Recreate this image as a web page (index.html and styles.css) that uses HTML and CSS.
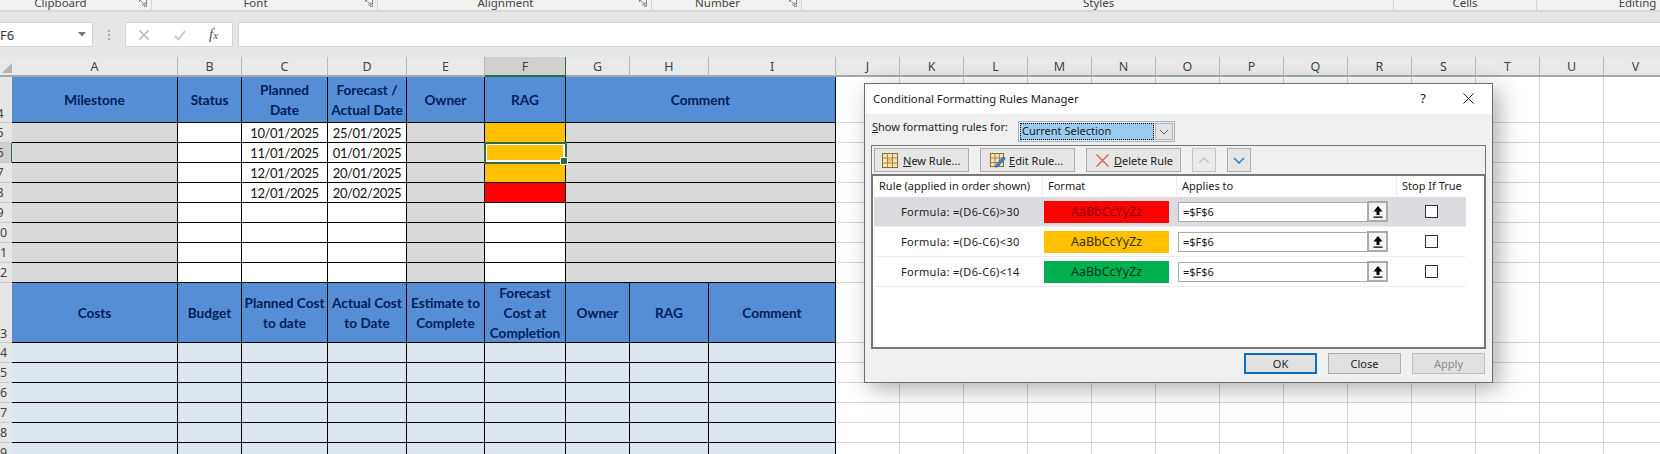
FILE: index.html
```html
<!DOCTYPE html>
<html lang="en">
<head>
<meta charset="utf-8">
<title>Conditional Formatting Rules Manager</title>
<link rel="stylesheet" href="styles.css">
</head>
<body>
<div class="ribbon">
  <div class="rgroup g-clip"><span class="rlabel rlabel-clip">Clipboard</span><svg class="launch" viewBox="0 0 8 8"><path d="M.5 3V.5H7.5V7.5H5M1 1l5 5M6 3v3H3" fill="none" stroke="#8a8a8a"/></svg></div>
  <div class="rgroup g-font"><span class="rlabel">Font</span><svg class="launch" viewBox="0 0 8 8"><path d="M.5 3V.5H7.5V7.5H5M1 1l5 5M6 3v3H3" fill="none" stroke="#8a8a8a"/></svg></div>
  <div class="rgroup g-align"><span class="rlabel">Alignment</span><svg class="launch" viewBox="0 0 8 8"><path d="M.5 3V.5H7.5V7.5H5M1 1l5 5M6 3v3H3" fill="none" stroke="#8a8a8a"/></svg></div>
  <div class="rgroup g-num"><span class="rlabel">Number</span><svg class="launch" viewBox="0 0 8 8"><path d="M.5 3V.5H7.5V7.5H5M1 1l5 5M6 3v3H3" fill="none" stroke="#8a8a8a"/></svg></div>
  <div class="rgroup g-styles"><span class="rlabel">Styles</span></div>
  <div class="rgroup g-cells"><span class="rlabel">Cells</span></div>
  <div class="rgroup g-edit"><span class="rlabel">Editing</span></div>
</div>
<div class="fbar">
  <div class="namebox"><span>F6</span><svg class="nb-arrow" viewBox="0 0 8 5"><path d="M0 0h8L4 4.500z" fill="#777"/></svg></div>
  <div class="dots"><i></i><i></i><i></i></div>
  <div class="fxbox">
    <svg class="fxi" viewBox="0 0 12 12"><path d="M1.500 1.500l9 9M10.500 1.500l-9 9" stroke="#c4c4c4" stroke-width="1.800" fill="none"/></svg>
    <svg class="fxi" viewBox="0 0 12 12"><path d="M1 7l3.500 3.500L11 2" stroke="#c4c4c4" stroke-width="1.800" fill="none"/></svg>
    <span class="fxt">f<sub>x</sub></span>
  </div>
  <div class="finput"></div>
</div>
<div class="sheet">
  <div class="ch corner"><svg class="corner-t" viewBox="0 0 10 10"><path d="M10 0v10H0z" fill="#b4b4b4"/></svg></div>
  <div class="ch">A</div><div class="ch">B</div><div class="ch">C</div><div class="ch">D</div><div class="ch">E</div><div class="ch ch-sel">F</div><div class="ch">G</div><div class="ch">H</div><div class="ch">I</div><div class="ch">J</div><div class="ch">K</div><div class="ch">L</div><div class="ch">M</div><div class="ch">N</div><div class="ch">O</div><div class="ch">P</div><div class="ch">Q</div><div class="ch">R</div><div class="ch">S</div><div class="ch">T</div><div class="ch">U</div><div class="ch">V</div>

  <div class="rh rh-end r-tall"><span>4</span></div>
  <div class="c hd">Milestone</div><div class="c hd">Status</div><div class="c hd">Planned<br>Date</div><div class="c hd">Forecast /<br>Actual Date</div><div class="c hd">Owner</div><div class="c hd">RAG</div><div class="c hd wide">Comment</div><div class="blank"></div>

  <div class="rh"><span>5</span></div><div class="c gy"></div><div class="c"></div><div class="c">10/01/2025</div><div class="c">25/01/2025</div><div class="c gy"></div><div class="c am"></div><div class="c gy wide"></div><div class="blank"></div>
  <div class="rh rh-sel"><span>6</span></div><div class="c gy"></div><div class="c"></div><div class="c">11/01/2025</div><div class="c">01/01/2025</div><div class="c gy"></div><div class="c am active"></div><div class="c gy wide"></div><div class="blank"></div>
  <div class="rh"><span>7</span></div><div class="c gy"></div><div class="c"></div><div class="c">12/01/2025</div><div class="c">20/01/2025</div><div class="c gy"></div><div class="c am"></div><div class="c gy wide"></div><div class="blank"></div>
  <div class="rh"><span>8</span></div><div class="c gy"></div><div class="c"></div><div class="c">12/01/2025</div><div class="c">20/02/2025</div><div class="c gy"></div><div class="c rd"></div><div class="c gy wide"></div><div class="blank"></div>
  <div class="rh"><span>9</span></div><div class="c gy"></div><div class="c"></div><div class="c"></div><div class="c"></div><div class="c gy"></div><div class="c"></div><div class="c gy wide"></div><div class="blank"></div>
  <div class="rh"><span>10</span></div><div class="c gy"></div><div class="c"></div><div class="c"></div><div class="c"></div><div class="c gy"></div><div class="c"></div><div class="c gy wide"></div><div class="blank"></div>
  <div class="rh"><span>11</span></div><div class="c gy"></div><div class="c"></div><div class="c"></div><div class="c"></div><div class="c gy"></div><div class="c"></div><div class="c gy wide"></div><div class="blank"></div>
  <div class="rh"><span>12</span></div><div class="c gy"></div><div class="c"></div><div class="c"></div><div class="c"></div><div class="c gy"></div><div class="c"></div><div class="c gy wide"></div><div class="blank"></div>

  <div class="rh rh-end"><span>13</span></div>
  <div class="c hd">Costs</div><div class="c hd">Budget</div><div class="c hd">Planned Cost<br>to date</div><div class="c hd">Actual Cost<br>to Date</div><div class="c hd">Estimate to<br>Complete</div><div class="c hd">Forecast<br>Cost at<br>Completion</div><div class="c hd">Owner</div><div class="c hd">RAG</div><div class="c hd">Comment</div><div class="blank"></div>

  <div class="rh"><span>14</span></div><div class="c lb"></div><div class="c lb"></div><div class="c lb"></div><div class="c lb"></div><div class="c lb"></div><div class="c lb"></div><div class="c lb"></div><div class="c lb"></div><div class="c lb"></div><div class="blank"></div>
  <div class="rh"><span>15</span></div><div class="c lb"></div><div class="c lb"></div><div class="c lb"></div><div class="c lb"></div><div class="c lb"></div><div class="c lb"></div><div class="c lb"></div><div class="c lb"></div><div class="c lb"></div><div class="blank"></div>
  <div class="rh"><span>16</span></div><div class="c lb"></div><div class="c lb"></div><div class="c lb"></div><div class="c lb"></div><div class="c lb"></div><div class="c lb"></div><div class="c lb"></div><div class="c lb"></div><div class="c lb"></div><div class="blank"></div>
  <div class="rh"><span>17</span></div><div class="c lb"></div><div class="c lb"></div><div class="c lb"></div><div class="c lb"></div><div class="c lb"></div><div class="c lb"></div><div class="c lb"></div><div class="c lb"></div><div class="c lb"></div><div class="blank"></div>
  <div class="rh"><span>18</span></div><div class="c lb"></div><div class="c lb"></div><div class="c lb"></div><div class="c lb"></div><div class="c lb"></div><div class="c lb"></div><div class="c lb"></div><div class="c lb"></div><div class="c lb"></div><div class="blank"></div>
  <div class="rh"><span>19</span></div><div class="c lb"></div><div class="c lb"></div><div class="c lb"></div><div class="c lb"></div><div class="c lb"></div><div class="c lb"></div><div class="c lb"></div><div class="c lb"></div><div class="c lb"></div><div class="blank"></div>
</div>

<div class="dialog">
  <div class="d-title">
    <span class="d-title-text">Conditional Formatting Rules Manager</span>
    <span class="d-help">?</span>
    <svg class="d-close" viewBox="0 0 11 11"><path d="M.5.500l10 10M10.500.500l-10 10" stroke="#222" fill="none"/></svg>
  </div>
  <div class="d-show">
    <span class="d-show-label"><u>S</u>how formatting rules for:</span>
    <div class="d-select">
      <span class="d-sel-text">Current Selection</span>
      <span class="d-sel-btn"><svg class="chev" viewBox="0 0 10 6"><path d="M1 1l4 4 4-4" stroke="#555" fill="none"/></svg></span>
    </div>
  </div>
  <div class="panel">
    <div class="toolbar">
      <div class="tbtn tbtn-new">
        <svg class="ticon" viewBox="0 0 16 15"><rect x=".5" y=".5" width="15" height="14" fill="#fbe3b4" stroke="#8a6d3b"/><path d="M.5 5h15M.5 10h15M5.500.500v14M10.500.500v14" stroke="#a5814a" fill="none"/><rect x="6" y="5.500" width="4" height="4" fill="#f6c26b"/></svg>
        <span><u>N</u>ew Rule...</span>
      </div>
      <div class="tbtn tbtn-edit">
        <svg class="ticon" viewBox="0 0 16 15"><rect x=".5" y=".5" width="13" height="13" fill="#fbe3b4" stroke="#8a6d3b"/><path d="M.5 5h13M.5 9.500h13M5 .500v13M9.500.500v13" stroke="#a5814a" fill="none"/><path d="M5.500 14.500l1-3.500 7-7.500 2 2-7 7.500z" fill="#3b86d1" stroke="#27629f" stroke-width=".6"/></svg>
        <span><u>E</u>dit Rule...</span>
      </div>
      <div class="tbtn tbtn-del">
        <svg class="ticon-x" viewBox="0 0 13 13"><path d="M.5.500l12 12M12.500.500l-12 12" stroke="#e2574c" stroke-width="1.200" fill="none"/></svg>
        <span><u>D</u>elete Rule</span>
      </div>
      <div class="tbtn tbtn-sq tbtn-off"><svg class="chev-b" viewBox="0 0 12 7"><path d="M1 6l5-5 5 5" stroke="#c4c4c4" stroke-width="1.300" fill="none"/></svg></div>
      <div class="tbtn tbtn-sq"><svg class="chev-b" viewBox="0 0 12 7"><path d="M1 1l5 5 5-5" stroke="#3b7fbf" stroke-width="1.500" fill="none"/></svg></div>
    </div>
    <div class="list">
      <div class="l-row l-head">
        <div class="lh">Rule (applied in order shown)</div>
        <div class="lh">Format</div>
        <div class="lh">Applies to</div>
        <div class="lh">Stop If True</div>
      </div>
      <div class="l-row rule rule-sel">
        <div class="r-name">Formula: =(D6-C6)&gt;30</div>
        <div class="r-fmt"><div class="sw sw-r">AaBbCcYyZz</div></div>
        <div class="r-app"><div class="appbox"><span class="app-text">=$F$6</span><span class="app-btn"><svg class="up" viewBox="0 0 10 12"><path d="M5 0L.5 5.500H3.500V9h3V5.500h3zM.5 10.500h9v1.200h-9z" fill="#000"/></svg></span></div></div>
        <div class="r-stop"><span class="cb"></span></div>
      </div>
      <div class="l-row rule">
        <div class="r-name">Formula: =(D6-C6)&lt;30</div>
        <div class="r-fmt"><div class="sw sw-a">AaBbCcYyZz</div></div>
        <div class="r-app"><div class="appbox"><span class="app-text">=$F$6</span><span class="app-btn"><svg class="up" viewBox="0 0 10 12"><path d="M5 0L.5 5.500H3.500V9h3V5.500h3zM.5 10.500h9v1.200h-9z" fill="#000"/></svg></span></div></div>
        <div class="r-stop"><span class="cb"></span></div>
      </div>
      <div class="l-row rule">
        <div class="r-name">Formula: =(D6-C6)&lt;14</div>
        <div class="r-fmt"><div class="sw sw-g">AaBbCcYyZz</div></div>
        <div class="r-app"><div class="appbox"><span class="app-text">=$F$6</span><span class="app-btn"><svg class="up" viewBox="0 0 10 12"><path d="M5 0L.5 5.500H3.500V9h3V5.500h3zM.5 10.500h9v1.200h-9z" fill="#000"/></svg></span></div></div>
        <div class="r-stop"><span class="cb"></span></div>
      </div>
    </div>
  </div>
  <div class="d-foot">
    <div class="fbtn fbtn-ok">OK</div>
    <div class="fbtn">Close</div>
    <div class="fbtn fbtn-off">Apply</div>
  </div>
</div>
</body>
</html>
```
FILE: styles.css
```css
* { box-sizing: border-box; }
html, body { margin: 0; padding: 0; }
body {
  width: 1660px; height: 454px; overflow: hidden; position: relative;
  background: #fff; font-family: "Noto Sans", sans-serif; color: #222;
}

/* ribbon */
.ribbon { height: 10px; display: flex; background: #f3f2f1; overflow: hidden; }
.rgroup { display: flex; align-items: flex-start; height: 10px; border-right: 1px solid #d4d4d4; color: #444; }
.g-clip { width: 152px; } .g-font { width: 226px; } .g-align { width: 274px; } .g-num { width: 150px; }
.g-styles { width: 592px; } .g-cells { width: 143px; } .g-edit { width: 123px; border-right: 0; }
.rlabel { flex: 1; text-align: center; font-size: 11.500px; line-height: 6px; padding-right: 6px; white-space: nowrap; }
.rlabel-clip { padding-right: 18px; }
.g-styles .rlabel { padding-right: 0; text-align: left; margin-left: 281px; }
.g-cells .rlabel { padding-right: 0; }
.g-edit .rlabel { padding-right: 0; margin-left: 78px; }
.launch { width: 8px; height: 8px; margin: -1px 4px 0 0; flex: none; }

/* formula bar */
.fbar {
  height: 47px; display: flex; padding: 12px 0 10px; align-items: stretch;
  background: linear-gradient(#d2d2d2, #e6e6e6 3px);
}
.namebox { width: 93px; background: #fff; border: 1px solid #d4d4d4; border-left: 0; display: flex; align-items: center; justify-content: space-between; padding-right: 6px; font-size: 13px; color: #333; }
.nb-arrow { width: 8px; height: 5px; }
.dots { width: 32px; display: flex; flex-direction: column; align-items: center; justify-content: center; gap: 2px; }
.dots i { width: 2px; height: 2px; background: #aaa; display: block; }
.fxbox { width: 108px; background: #fff; border: 1px solid #d4d4d4; display: flex; align-items: center; padding-left: 12px; gap: 24px; }
.fxi { width: 12px; height: 12px; }
.fxt { font-family: "Liberation Serif", serif; font-style: italic; font-size: 15px; color: #555; margin-left: -1px; line-height: 1; }
.fxt sub { font-size: 11px; vertical-align: baseline; }
.finput { flex: 1; margin-left: 5px; background: #fff; border: 1px solid #d4d4d4; border-right: 0; }

/* sheet */
.sheet {
  display: grid;
  grid-template-columns: 12px 166px 64px 86px 79px 78px 81px 64px 79px 127px repeat(13, 64px);
  grid-template-rows: 20px 46px repeat(8, 20px) 60px repeat(6, 20px);
  font-family: Lato, sans-serif; font-size: 13px; color: #111;
}
.ch {
  display: flex; align-items: center; justify-content: center; overflow: hidden;
  background: #e9e9e9; border-right: 1px solid #b8b8b8; border-bottom: 2px solid #a4a8a8;
  font-family: "Noto Sans", sans-serif; font-size: 12.500px; color: #444;
}
.corner { border-right: 0; justify-content: flex-end; align-items: flex-end; padding: 0 0 2px; }
.corner-t { width: 10px; height: 10px; }
.ch-sel { background: #d0d0d0; border-bottom-color: #217346; border-right-color: #217346; }

.rh {
  background: #e6e6e6; overflow: hidden; display: flex; align-items: center;
  border-bottom: 1px solid #c8c8c8;
  font-family: "Noto Sans", sans-serif; font-size: 12.500px; color: #444;
}
.rh span { width: 24px; margin-left: -12px; text-align: center; flex: none; }
.rh-end { align-items: flex-end; }
.rh-sel { background: #d0d0d0; border-right: 1px solid #217346; }

.c {
  display: flex; align-items: center; justify-content: center; text-align: center;
  background: #fff; border-right: 1px solid #000; border-bottom: 1px solid #000;
  white-space: nowrap; line-height: 20px; letter-spacing: -.35px;
}
.hd { background: #558ed5; color: #00205a; font-weight: 700; font-size: 13.600px; letter-spacing: 0; }
.gy { background: #d9d9d9; }
.lb { background: #dce6f1; }
.am { background: #ffc000; }
.rd { background: #ff0000; }
.wide { grid-column: span 3; }
.active { position: relative; outline: 2px solid #2f6b45; outline-offset: -1px; box-shadow: inset 0 0 0 2px #fff; z-index: 1; }
.active::after {
  content: ""; position: absolute; right: -3px; bottom: -3px; width: 6px; height: 6px;
  background: #217346; border: 1px solid #fff;
}
.blank {
  grid-column: span 13; border-bottom: 1px solid #d4d4d4;
  background: repeating-linear-gradient(to right, transparent 0 63px, #d4d4d4 63px 64px);
}

/* dialog */
.dialog {
  position: absolute; left: 864px; top: 83px; width: 629px; height: 300px;
  background: #f0f0f0; border: 1px solid #6e6e6e;
  box-shadow: 6px 6px 22px rgba(0,0,0,.32);
  font-size: 11px; color: #1c1c1c;
  display: flex; flex-direction: column;
}
.d-title { height: 30px; background: #fff; display: flex; align-items: center; padding: 0 0 2px 8px; }
.d-title-text { font-size: 11.300px; }
.d-help { margin-left: auto; font-size: 13px; width: 10px; text-align: center; }
.d-close { width: 11px; height: 11px; margin: 0 18px 0 35px; }
.d-show { height: 31px; display: flex; align-items: flex-start; padding: 6px 0 0 7px; }
.d-show-label { width: 146px; line-height: 14px; white-space: nowrap; }
.d-select { width: 157px; height: 21px; margin-top: 1px; border: 1px solid #aab4c0; background: #e8edf3; display: flex; padding: 1px; }
.d-sel-text { flex: 1; background: #9ccbf0; outline: 1px dotted #000; outline-offset: -1px; line-height: 16px; padding-left: 2px; }
.d-sel-btn { width: 18px; margin-left: 1px; border: 1px solid #b5b5b5; background: #e4e4e4; display: flex; align-items: center; justify-content: center; }
.chev { width: 10px; height: 6px; }

.panel { margin: 0 6px; height: 204px; border: 1px solid #767676; display: flex; flex-direction: column; flex: none; }
.toolbar { height: 28px; flex: none; display: flex; gap: 11px; padding: 2px 0 0 2px; }
.tbtn { height: 24px; width: 95px; flex: none; background: #e6e6e6; border: 1px solid #adadad; display: flex; align-items: center; color: #222; }
.tbtn-new { padding-left: 7px; gap: 5px; }
.tbtn-edit { padding-left: 9px; gap: 3px; }
.tbtn-del { padding-left: 9px; gap: 5px; }
.tbtn-sq { width: 24px; justify-content: center; }
.tbtn-off { border-color: #c6c6c6; background: #ebebeb; }
.ticon { width: 16px; height: 15px; flex: none; }
.ticon-x { width: 13px; height: 13px; flex: none; }
.chev-b { width: 12px; height: 7px; }

.list { flex: 1; background: #fff; border: 1px solid #767676; border-width: 2px 1px 1px 1px; padding-left: 1px; }
.l-row { display: grid; grid-template-columns: 169px 134px 220px 69px; width: 592px; }
.l-head { height: 21px; }
.lh { border-right: 1px solid #ececec; padding-left: 5px; line-height: 20px; white-space: nowrap; }
.lh:last-child { border-right: 0; }
.rule { height: 30px; border-bottom: 1px solid #eeeeee; align-items: center; }
.rule-sel { background: #dcdce0; }
.r-name { padding-left: 27px; white-space: nowrap; letter-spacing: .35px; }
.r-fmt { height: 100%; padding: 4px 8px 3px 1px; }
.sw { height: 22px; text-align: center; line-height: 21px; font-size: 12.500px; }
.sw-r { background: #ff0000; color: #8a0000; }
.sw-a { background: #ffc000; color: #3a2e00; }
.sw-g { background: #00b050; color: #05341a; }
.r-app { padding-left: 1px; }
.appbox { width: 210px; height: 20px; background: #fff; border: 1px solid #ababab; display: flex; align-items: center; justify-content: space-between; }
.app-text { padding-left: 4px; }
.app-btn { width: 21px; height: 21px; margin: 0 -1px 0 0; background: #f4f4f4; border: 2px solid #ababab; display: flex; align-items: center; justify-content: center; flex: none; }
.up { width: 10px; height: 12px; }
.r-stop { display: flex; justify-content: center; }
.cb { width: 13px; height: 13px; background: #fff; border: 1px solid #333; display: block; }

.d-foot { display: flex; justify-content: flex-end; gap: 11px; padding: 4px 7px 0 0; }
.fbtn { width: 73px; height: 21px; background: #e1e1e1; border: 1px solid #adadad; display: flex; align-items: center; justify-content: center; }
.fbtn-ok { border: 2px solid #0f6cbd; }
.fbtn-off { color: #8a8a8a; border-color: #bfbfbf; }
```
